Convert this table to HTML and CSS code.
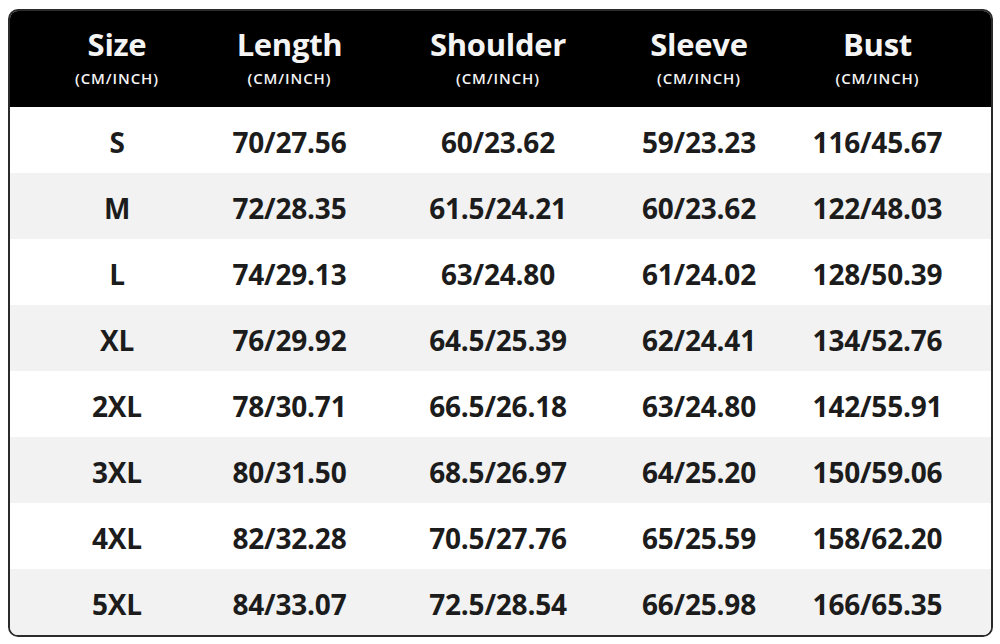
FILE: index.html
```html
<!DOCTYPE html>
<html lang="en">
<head>
<meta charset="utf-8">
<title>Size Chart</title>
<link rel="stylesheet" href="styles.css">
</head>
<body>
<div class="chart">
  <div class="row head">
    <div class="cell"><span class="title">Size</span><span class="unit">(CM/INCH)</span></div>
    <div class="cell"><span class="title">Length</span><span class="unit">(CM/INCH)</span></div>
    <div class="cell"><span class="title">Shoulder</span><span class="unit">(CM/INCH)</span></div>
    <div class="cell"><span class="title">Sleeve</span><span class="unit">(CM/INCH)</span></div>
    <div class="cell last"><span class="title">Bust</span><span class="unit">(CM/INCH)</span></div>
  </div>
  <div class="row">
    <div class="cell size">S</div><div class="cell">70/27.56</div><div class="cell">60/23.62</div><div class="cell">59/23.23</div><div class="cell last">116/45.67</div>
  </div>
  <div class="row alt">
    <div class="cell size">M</div><div class="cell">72/28.35</div><div class="cell">61.5/24.21</div><div class="cell">60/23.62</div><div class="cell last">122/48.03</div>
  </div>
  <div class="row">
    <div class="cell size">L</div><div class="cell">74/29.13</div><div class="cell">63/24.80</div><div class="cell">61/24.02</div><div class="cell last">128/50.39</div>
  </div>
  <div class="row alt">
    <div class="cell size">XL</div><div class="cell">76/29.92</div><div class="cell">64.5/25.39</div><div class="cell">62/24.41</div><div class="cell last">134/52.76</div>
  </div>
  <div class="row">
    <div class="cell size">2XL</div><div class="cell">78/30.71</div><div class="cell">66.5/26.18</div><div class="cell">63/24.80</div><div class="cell last">142/55.91</div>
  </div>
  <div class="row alt">
    <div class="cell size">3XL</div><div class="cell">80/31.50</div><div class="cell">68.5/26.97</div><div class="cell">64/25.20</div><div class="cell last">150/59.06</div>
  </div>
  <div class="row">
    <div class="cell size">4XL</div><div class="cell">82/32.28</div><div class="cell">70.5/27.76</div><div class="cell">65/25.59</div><div class="cell last">158/62.20</div>
  </div>
  <div class="row alt">
    <div class="cell size">5XL</div><div class="cell">84/33.07</div><div class="cell">72.5/28.54</div><div class="cell">66/25.98</div><div class="cell last">166/65.35</div>
  </div>
</div>
</body>
</html>
```

FILE: styles.css
```css
* { box-sizing: border-box; }

html, body {
  margin: 0;
  padding: 0;
  background: #ffffff;
}

body {
  font-family: "Open Sans", "Lato", "DejaVu Sans", sans-serif;
  font-weight: 700;
  color: #1c1c1c;
}

.chart {
  margin: 9px 0 0 8px;
  width: 985px;
  border: 2px solid #2b2b2b;
  border-radius: 10px;
  overflow: hidden;
  background: #ffffff;
}

.row {
  display: grid;
  grid-template-columns: 214px 131px 286px 116px 234px;
  height: 66px;
  background: #ffffff;
}

.row.alt {
  background: #f2f2f2;
}

.row.head {
  height: 96px;
  background: #000000;
  color: #f4f4f4;
}

.cell {
  display: flex;
  align-items: center;
  justify-content: center;
  white-space: nowrap;
  font-size: 28px;
  line-height: 1;
  letter-spacing: -0.2px;
  padding-top: 4px;
}

.cell.last {
  padding-left: 7px;
}

.head .cell {
  flex-direction: column;
  padding-top: 0;
  padding-bottom: 4px;
}

.title {
  font-size: 31px;
  line-height: 1;
  letter-spacing: -0.3px;
}

.unit {
  margin-top: 11px;
  font-size: 15px;
  line-height: 1;
  letter-spacing: 0.9px;
  font-weight: 600;
}
```
